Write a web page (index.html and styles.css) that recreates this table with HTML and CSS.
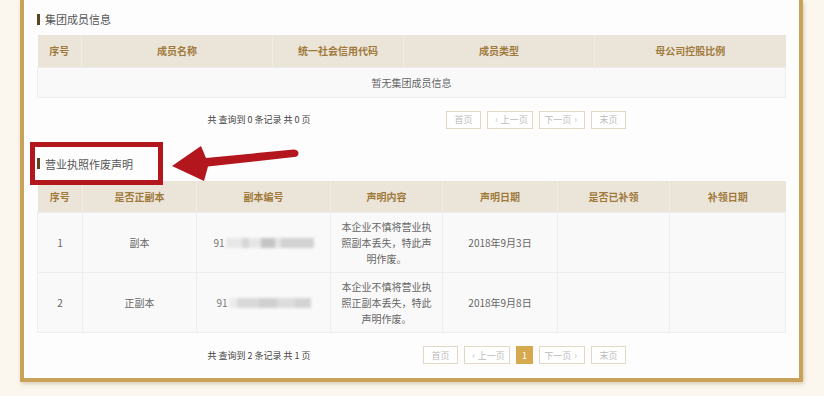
FILE: index.html
```html
<!DOCTYPE html>
<html lang="zh-CN">
<head>
<meta charset="utf-8">
<title>企业信息</title>
<link rel="stylesheet" href="styles.css">
</head>
<body>
<div class="frame">
  <div class="panel">
    <section class="block">
      <h3 class="title"><span class="bar"></span>集团成员信息</h3>
      <table class="grid">
        <colgroup><col style="width:44px"><col style="width:191px"><col style="width:131px"><col style="width:191px"><col style="width:191px"></colgroup>
        <thead><tr><th>序号</th><th>成员名称</th><th>统一社会信用代码</th><th>成员类型</th><th>母公司控股比例</th></tr></thead>
        <tbody><tr class="empty"><td colspan="5">暂无集团成员信息</td></tr></tbody>
      </table>
      <div class="pager">
        <div class="pager-info">共 查询到 0 条记录 共 0 页</div>
        <div class="pager-btns">
          <span class="pbtn w35">首页</span>
          <span class="pbtn w46"><i>‹</i>上一页</span>
          <span class="pbtn w46">下一页<i>›</i></span>
          <span class="pbtn w35">末页</span>
        </div>
      </div>
    </section>

    <section class="block second">
      <h3 class="title"><span class="bar"></span>营业执照作废声明</h3>
      <table class="grid">
        <colgroup><col style="width:45px"><col style="width:114px"><col style="width:134px"><col style="width:112px"><col style="width:115px"><col style="width:112px"><col style="width:116px"></colgroup>
        <thead><tr><th>序号</th><th>是否正副本</th><th>副本编号</th><th>声明内容</th><th>声明日期</th><th>是否已补领</th><th>补领日期</th></tr></thead>
        <tbody>
          <tr class="row"><td>1</td><td>副本</td><td><span class="code">91<span class="blur b1"></span></span></td><td class="desc">本企业不慎将营业执<br>照副本丢失，特此声<br>明作废。</td><td>2018年9月3日</td><td></td><td></td></tr>
          <tr class="row"><td>2</td><td>正副本</td><td><span class="code">91<span class="blur b2"></span></span></td><td class="desc">本企业不慎将营业执<br>照正副本丢失，特此<br>声明作废。</td><td>2018年9月8日</td><td></td><td></td></tr>
        </tbody>
      </table>
      <div class="pager">
        <div class="pager-info">共 查询到 2 条记录 共 1 页</div>
        <div class="pager-btns">
          <span class="pbtn w35">首页</span>
          <span class="pbtn w46"><i>‹</i>上一页</span>
          <span class="pbtn active">1</span>
          <span class="pbtn w46">下一页<i>›</i></span>
          <span class="pbtn w35">末页</span>
        </div>
      </div>
    </section>

    <div class="mark-box"></div>
    <svg class="mark-arrow" viewBox="165 140 140 46" width="140" height="46" aria-hidden="true">
      <path d="M172 166 L201 146 L206 158 L294 149.5 Q298.5 150 298.5 153.5 Q298 157 294 157 L208 166.5 L204 181 Z" fill="#b3161d"/>
    </svg>
  </div>
</div>
</body>
</html>
```

FILE: styles.css
```css
* { box-sizing: border-box; }
html, body { margin: 0; padding: 0; }
body {
  background: #fbf7ef;
  font-family: "Noto Sans CJK SC", "Noto Sans", sans-serif;
  width: 824px;
  height: 396px;
  overflow: hidden;
}
.frame {
  padding-left: 20px;
  width: 804px;
}
.panel {
  position: relative;
  width: 783px;
  background: #fdfdfd;
  border: 4px solid #c9a25a;
  border-top: none;
  box-shadow: 1px 2px 4px rgba(160, 130, 80, 0.35);
  padding: 9px 14px 14px 13px;
}
.title {
  margin: 0;
  height: 20px;
  line-height: 20px;
  font-size: 11px;
  font-weight: normal;
  color: #555;
  display: flex;
  align-items: center;
}
.bar {
  display: inline-block;
  width: 3px;
  height: 11px;
  background: #5e4321;
  margin-right: 5px;
}
.block .grid { margin-top: 6px; }
.second { margin-top: 25px; }
.second .grid { margin-top: 7px; }
.grid {
  width: 748px;
  table-layout: fixed;
  border-collapse: collapse;
  font-size: 10px;
}
.grid th {
  height: 32px;
  padding: 0;
  background: #ebe4d8;
  color: #a07a3b;
  font-weight: bold;
  border-left: 1px solid #f1ece4;
  text-align: center;
}
.grid th:first-child { border-left: none; }
.grid td {
  padding: 0;
  text-align: center;
  color: #666;
  border: 1px solid #eeeeee;
  background: #f9f9f9;
}
.empty td { height: 30px; color: #666; }
.row td { height: 60px; }
.grid td.desc { line-height: 16px; padding: 0 8px; }
.code {
  display: inline-flex;
  align-items: center;
  color: #777;
}
.blur {
  display: inline-block;
  height: 10px;
  margin-left: 1px;
  filter: blur(1.4px);
}
.b1 {
  width: 88px;
  background: linear-gradient(90deg, #e8e8e8 0 18%, #d6d6d6 18% 26%, #e6e6e6 26% 40%, #c4c4c4 40% 56%, #e4e4e4 56% 62%, #d2d2d2 62% 100%);
}
.b2 {
  width: 82px;
  background: linear-gradient(90deg, #ececec 0 10%, #d9d9d9 10% 36%, #d0d0d0 36% 58%, #dcdcdc 58% 80%, #d3d3d3 80% 100%);
}
.pager {
  display: flex;
  align-items: center;
  margin-top: 13px;
  height: 18px;
}
.pager-info {
  flex: 0 0 200px;
  margin-left: 122px;
  text-align: center;
  font-size: 9px;
  color: #444;
  white-space: nowrap;
}
.pager-btns {
  display: flex;
  gap: 6px;
  margin-left: auto;
  margin-right: 159px;
}
.pbtn {
  display: inline-flex;
  align-items: center;
  justify-content: center;
  height: 18px;
  border: 1px solid #e2d8c4;
  background: #fff;
  font-size: 9px;
  color: #bbb;
}
.pbtn i { font-style: normal; margin: 0 3px; font-size: 9px; }
.w35 { width: 35px; }
.w46 { width: 46px; }
.active {
  width: 17px;
  background: #d6a94f;
  border-color: #d6a94f;
  color: #fff;
}
.mark-box {
  position: absolute;
  left: 6px;
  top: 142px;
  width: 133px;
  height: 43px;
  border: 5px solid #b3161d;
}
.mark-arrow {
  position: absolute;
  left: 141px;
  top: 140px;
}
```
